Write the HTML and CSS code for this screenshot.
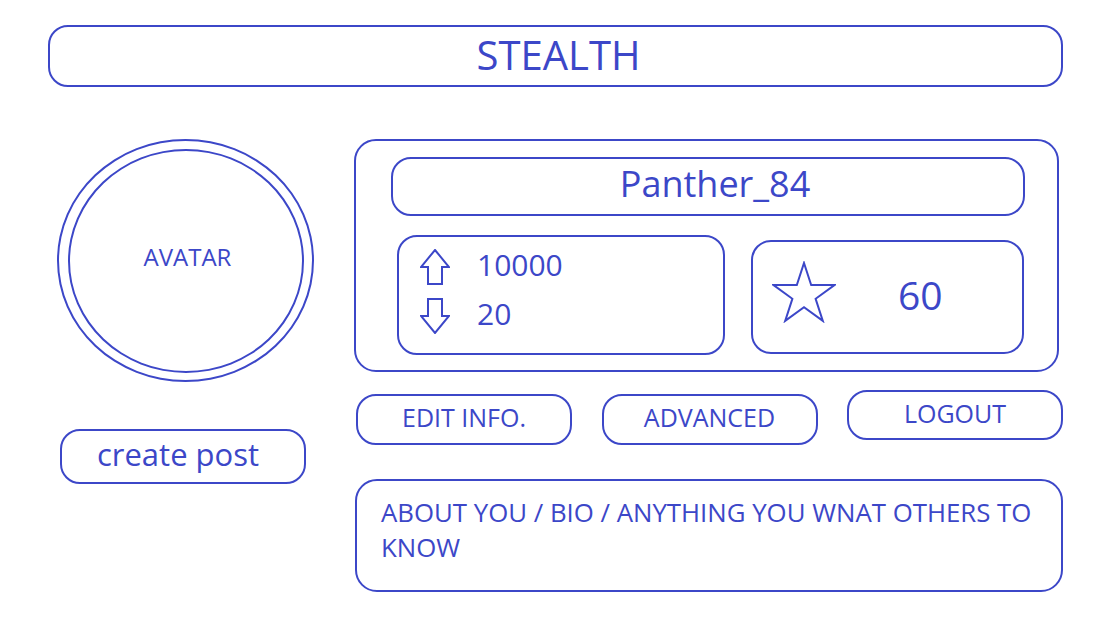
FILE: index.html
```html
<!DOCTYPE html>
<html lang="en">
<head>
<meta charset="utf-8">
<title>STEALTH profile</title>
<link rel="stylesheet" href="styles.css">
</head>
<body>
<div class="page">
  <header class="title-bar"><h1 class="title">STEALTH</h1></header>
  <div class="main">
    <div class="left">
      <div class="avatar"><div class="avatar-inner">AVATAR</div></div>
      <button class="create-post">create post</button>
    </div>
    <div class="right">
      <section class="profile">
        <div class="username">Panther_84</div>
        <div class="stats">
          <div class="votes">
            <div class="vote-row">
              <svg class="arrow" width="30" height="36" viewBox="0 0 30 36"><polygon points="15,1 29,18 22,18 22,35 8,35 8,18 1,18" fill="none" stroke="currentColor" stroke-width="2" stroke-linejoin="miter"/></svg>
              <span class="vote-num">10000</span>
            </div>
            <div class="vote-row">
              <svg class="arrow" width="30" height="36" viewBox="0 0 30 36"><polygon points="8,1 22,1 22,18 29,18 15,35 1,18 8,18" fill="none" stroke="currentColor" stroke-width="2" stroke-linejoin="miter"/></svg>
              <span class="vote-num">20</span>
            </div>
          </div>
          <div class="rating">
            <svg class="star" width="64" height="62" viewBox="-1 -1 64 62"><polygon points="31,1 38.18,23.11 61.43,23.11 42.62,36.78 49.81,58.89 31,45.22 12.19,58.89 19.38,36.78 0.57,23.11 23.82,23.11" fill="none" stroke="currentColor" stroke-width="2" stroke-linejoin="miter"/></svg>
            <span class="rating-num">60</span>
          </div>
        </div>
      </section>
      <div class="actions">
        <button class="action action-low">EDIT INFO.</button>
        <button class="action action-low">ADVANCED</button>
        <button class="action">LOGOUT</button>
      </div>
      <div class="bio">ABOUT YOU / BIO / ANYTHING YOU WNAT OTHERS TO KNOW</div>
    </div>
  </div>
</div>
</body>
</html>
```
FILE: styles.css
```css
* { box-sizing: border-box; }
html, body {
  margin: 0;
  padding: 0;
  background: #ffffff;
}
body {
  font-family: "Open Sans", "Noto Sans", sans-serif;
  color: #3c47c8;
  width: 1100px;
  height: 619px;
  overflow: hidden;
}
button {
  font-family: inherit;
  color: inherit;
  background: #ffffff;
  margin: 0;
  padding: 0;
  cursor: pointer;
}
.page {
  padding: 25px 0 0 48px;
}
.title-bar {
  width: 1015px;
  height: 62px;
  border: 2px solid #3c47c8;
  border-radius: 20px;
  display: flex;
  align-items: center;
  justify-content: center;
}
.title {
  margin: 0;
  font-size: 40px;
  font-weight: 400;
  line-height: 1;
  padding: 0 0 2px 6px;
}
.main {
  display: flex;
  margin-top: 52px;
}
.left {
  width: 306px;
  display: flex;
  flex-direction: column;
  align-items: flex-start;
}
.avatar {
  margin-left: 9px;
  width: 257px;
  height: 243px;
  border: 2px solid #3c47c8;
  border-radius: 50%;
  padding: 7.5px 8.5px;
}
.avatar-inner {
  width: 100%;
  height: 100%;
  border: 2px solid #3c47c8;
  border-radius: 50%;
  display: flex;
  align-items: center;
  justify-content: center;
  font-size: 24px;
  padding: 0 0 9px 4px;
}
.create-post {
  margin-left: 12px;
  margin-top: 47px;
  width: 246px;
  height: 55px;
  border: 2px solid #3c47c8;
  border-radius: 20px;
  font-size: 31px;
  padding: 0 10px 6px 0;
}
.right {
  width: 709px;
}
.profile {
  width: 705px;
  height: 233px;
  border: 2px solid #3c47c8;
  border-radius: 22px;
  padding: 16px 32px 0 35px;
}
.username {
  width: 634px;
  height: 59px;
  border: 2px solid #3c47c8;
  border-radius: 20px;
  display: flex;
  align-items: center;
  justify-content: center;
  font-size: 36px;
  padding: 0 0 6px 14px;
}
.stats {
  display: flex;
  align-items: flex-start;
  margin-top: 19px;
  margin-left: 6px;
}
.votes {
  width: 328px;
  height: 120px;
  border: 2px solid #3c47c8;
  border-radius: 20px;
  padding: 5px 0 0 21px;
}
.vote-row {
  display: flex;
  align-items: center;
  height: 49px;
}
.arrow { display: block; }
.vote-num {
  margin-left: 27px;
  font-size: 30px;
  line-height: 1;
  padding-bottom: 4px;
}
.rating {
  margin-left: 26px;
  margin-top: 5px;
  width: 273px;
  height: 114px;
  border: 2px solid #3c47c8;
  border-radius: 20px;
  display: flex;
  align-items: center;
  padding-left: 19px;
}
.star {
  display: block;
  margin-bottom: 10px;
}
.rating-num {
  margin-left: 62px;
  font-size: 39px;
  line-height: 1;
  padding-bottom: 6px;
}
.actions {
  display: flex;
  justify-content: space-between;
  align-items: flex-start;
  width: 707px;
  margin-left: 2px;
  margin-top: 18px;
}
.action {
  width: 216px;
  height: 50px;
  border: 2px solid #3c47c8;
  border-radius: 20px;
  font-size: 25px;
  padding: 0 0 5px 0;
}
.action-low {
  margin-top: 4px;
  height: 51px;
}
.bio {
  margin-top: 34px;
  margin-left: 1px;
  width: 708px;
  height: 113px;
  border: 2px solid #3c47c8;
  border-radius: 22px;
  padding: 14px 24px;
  font-size: 25.8px;
  line-height: 35px;
}
```
